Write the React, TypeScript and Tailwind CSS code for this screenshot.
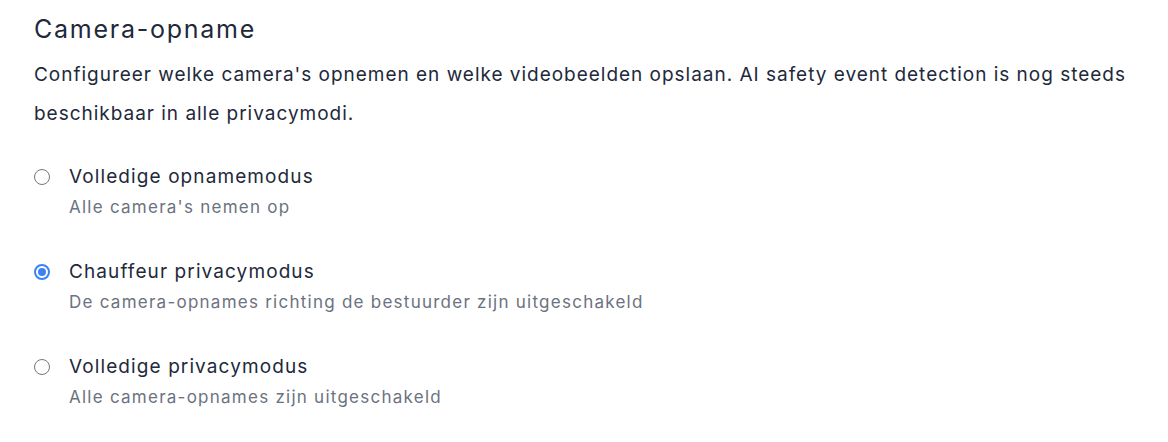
import { useState } from "react";

const modes = [
  { id: "full", label: "Volledige opnamemodus", hint: "Alle camera's nemen op" },
  {
    id: "driver",
    label: "Chauffeur privacymodus",
    hint: "De camera-opnames richting de bestuurder zijn uitgeschakeld",
  },
  { id: "privacy", label: "Volledige privacymodus", hint: "Alle camera-opnames zijn uitgeschakeld" },
];

export default function App() {
  const [mode, setMode] = useState("driver");

  return (
    <div className="min-h-screen bg-white px-[34px] pt-[11px] font-['Inter',sans-serif] text-[#1e293b]">
      <h2 className="text-[25px] leading-9 tracking-[1.75px]">Camera-opname</h2>
      <p className="mt-[8px] max-w-[1110px] text-[19px] leading-[39px] tracking-[0.98px]">
        Configureer welke camera's opnemen en welke videobeelden opslaan. AI safety event detection is nog steeds
        beschikbaar in alle privacymodi.
      </p>

      <div className="mt-[30px] flex flex-col gap-[39px]">
        {modes.map((m) => {
          const checked = mode === m.id;
          return (
            <label key={m.id} className="flex cursor-pointer items-start gap-[19px]">
              <input
                type="radio"
                name="mode"
                checked={checked}
                onChange={() => setMode(m.id)}
                className="sr-only"
              />
              <span
                className={
                  checked
                    ? "mt-[6px] grid size-4 shrink-0 place-items-center rounded-full border-2 border-[#3b82f6] bg-white"
                    : "mt-[6px] grid size-4 shrink-0 place-items-center rounded-full border border-[#767676] bg-white"
                }
              >
                {checked && <span className="size-2 rounded-full bg-[#3b82f6]" />}
              </span>
              <span className="flex flex-col">
                <span className="text-[19px] leading-7 tracking-[1.1px]">{m.label}</span>
                <span className="mt-[4px] text-[17px] leading-6 tracking-[1.25px] text-[#6b7280]">{m.hint}</span>
              </span>
            </label>
          );
        })}
      </div>
    </div>
  );
}
